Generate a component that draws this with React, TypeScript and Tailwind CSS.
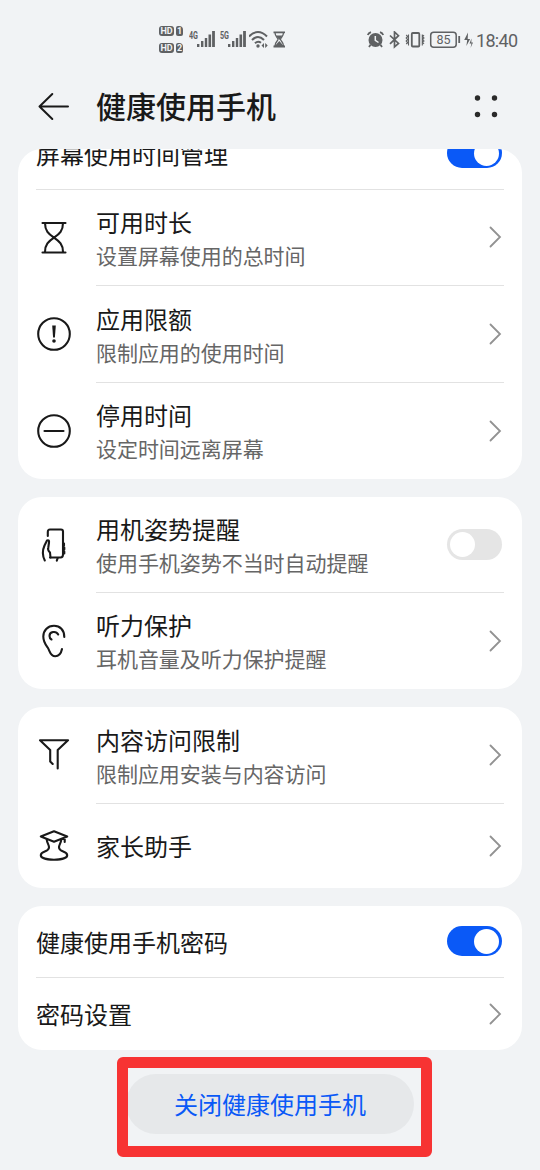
import type { ReactNode } from "react";

const Signal = ({ label }: { label: string }) => (
  <svg width="28" height="20" viewBox="0 0 28 20" fill="#5f6163">
    <text x="0" y="9.500" fontSize="10" fontWeight="700" textLength="9" lengthAdjust="spacingAndGlyphs" className="font-[Roboto,sans-serif]">
      {label}
    </text>
    <rect x="8" y="15" width="2.4" height="3" />
    <rect x="12" y="12" width="2.4" height="6" />
    <rect x="15.800" y="9" width="2.4" height="9" />
    <rect x="19.500" y="5.500" width="2.600" height="12.500" />
    <rect x="23.100" y="2" width="2.800" height="16" />
  </svg>
);

const HdBadge = ({ sim }: { sim: string }) => (
  <div className="flex gap-[2px] text-[9px] leading-[10px] font-bold text-[#f1f3f5] font-[Roboto,sans-serif]">
    <span className="h-[10px] w-[15px] rounded-[3px] bg-[#5f6163] text-center tracking-[-0.2px]">HD</span>
    <span className="h-[10px] w-[7px] rounded-[2px] rounded-tr-[4px] bg-[#5f6163] text-center">{sim}</span>
  </div>
);

const StatusBar = () => (
  <div className="flex h-[76px] shrink-0 justify-between pl-[159px] pr-[22px] pt-[26px]">
    <div className="flex">
      <div className="flex w-[30px] flex-col gap-[7px]">
        <HdBadge sim="1" />
        <HdBadge sim="2" />
      </div>
      <div className="flex pt-[3px]">
        <Signal label="4G" />
        <div className="w-[3px]" />
        <Signal label="5G" />
      </div>
      <svg className="mt-[4px] ml-px" width="20" height="20" viewBox="0 0 20 20" fill="none" stroke="#5f6163" strokeWidth="2">
        <path d="M0 6.500Q9-2.500 18 6.500M3 10Q9 4 15 10M6 13.200Q9 10.500 12 12.800" />
        <circle cx="9" cy="16" r="1.700" fill="#5f6163" stroke="none" />
        <path d="M15 13v5l-2.500-2.500zM16.200 13v5l2.500-2.500z" fill="#5f6163" stroke="none" />
      </svg>
      <svg className="mt-[5px] ml-[4px]" width="13" height="17" viewBox="0 0 13 17" fill="none" stroke="#5f6163" strokeWidth="1.300">
        <path d="M.5 1.300h11.500M.5 15.500h11.500" strokeWidth="1.800" />
        <path d="M2 1.500C2 6 5 6.500 5 8.300S2 11 2 15M10.500 1.500C10.500 6 7.500 6.500 7.500 8.300S10.500 11 10.500 15" />
        <path d="M3 4.500h6.500L6.300 9zM6.300 10l4.400 5h-8.900z" fill="#5f6163" stroke="none" />
      </svg>
    </div>
    <div className="flex pt-[5px]">
      <svg width="106" height="18" viewBox="0 0 106 18" fill="none" stroke="#5f6163" strokeWidth="1.500">
        <circle cx="8.500" cy="9" r="7" fill="#5f6163" stroke="none" />
        <path d="M.8 4Q1.500 2 4 1.200M13 1.200Q15.500 2 16.200 4M3.500 13.800L2 16M13.500 13.800L15 16" strokeWidth="1.800" />
        <path d="M8.300 5v4.300l3.200 2.200" stroke="#f1f3f5" />
        <path d="M23 4.500l8.500 8L27.500 16V1l4 3.700L23 12.800" strokeWidth="1.700" />
        <rect x="44.800" y="2" width="7.500" height="13.500" rx="1" strokeWidth="1.800" />
        <path d="M39.200 4l1.500 1.500-1.500 1.500 1.500 1.500-1.500 1.500 1.500 1.500-1.500 1.500M41.500 3.500v11M55.300 3.500v11M57 4l-1.300 1.500 1.300 1.500-1.300 1.500 1.300 1.500-1.300 1.500 1.300 1.500" strokeWidth="1.100" />
        <rect x="63.700" y="1.300" width="25.500" height="15" rx="3" />
        <text x="69.500" y="13.200" fontSize="12.500" fill="#5f6163" stroke="none" textLength="14" className="font-[Roboto,sans-serif]">
          85
        </text>
        <path d="M92.200 5v7" strokeWidth="1.800" />
        <path d="M101 1.500l-3.800 7.500h3l-.8 6 3.700-7h-2.400zM104.500 7.500l-2 5h2l-1 4.500 2.500-5.500h-1.700z" fill="#5f6163" stroke="none" />
      </svg>
      <span className="ml-[3px] w-[42px] whitespace-nowrap text-[18px] leading-[19px] tracking-[-0.7px] text-[#5f6163] font-[Roboto,sans-serif]">
        18:40
      </span>
    </div>
  </div>
);

const Header = () => (
  <div className="flex h-[60px] shrink-0 items-center pl-9 pr-10">
    <svg width="36" height="36" viewBox="0 0 36 36" fill="none" stroke="#191919" strokeWidth="2" strokeLinecap="round" strokeLinejoin="round">
      <path d="M32 18.500H3.500M16.300 6L3.500 18.500 16.300 31" />
    </svg>
    <h1 className="ml-6 flex-1 pb-[2px] text-[30px] leading-[44px] font-medium">健康使用手机</h1>
    <svg width="28" height="28" viewBox="0 0 28 28" fill="#2a2a2a">
      <circle cx="5.500" cy="6" r="2.700" />
      <circle cx="22.500" cy="6" r="2.700" />
      <circle cx="5.500" cy="22.500" r="2.700" />
      <circle cx="22.500" cy="22.500" r="2.700" />
    </svg>
  </div>
);

const Chevron = () => (
  <svg width="16" height="24" viewBox="0 0 16 24" fill="none" stroke="#929292" strokeWidth="1.800" strokeLinecap="round">
    <path d="M2.500 2.500L12 12 2.500 21.500" />
  </svg>
);

const Toggle = ({ on }: { on?: boolean }) => (
  <span className={`mr-[2.5px] flex h-[30.5px] w-[55px] items-center rounded-full px-[3px] ${on ? "justify-end bg-[#0a59f7]" : "bg-[#e5e5e5]"}`}>
    <span className="size-[25px] rounded-full bg-white" />
  </span>
);

const Icon = ({ children }: { children: ReactNode }) => (
  <svg className="mr-6 shrink-0" width="36" height="36" viewBox="0 0 36 36" fill="none" stroke="#191919" strokeWidth="2.100" strokeLinecap="round" strokeLinejoin="round">
    {children}
  </svg>
);

const icons = {
  hourglass: (
    <Icon>
      <path d="M6.500 3h23M6.500 32.500h23M9 3C9 11 12.500 14 18 17.700C12.500 21.500 9 24.500 9 32M27 3C27 11 23.500 14 18 17.700C23.500 21.500 27 24.500 27 32" />
    </Icon>
  ),
  limit: (
    <Icon>
      <circle cx="18" cy="18" r="15.800" />
      <path d="M16.200 9.500h3.600l-.9 12h-1.800z" fill="#191919" stroke="none" />
      <circle cx="18" cy="25" r="1.800" fill="#191919" stroke="none" />
    </Icon>
  ),
  pause: (
    <Icon>
      <circle cx="18" cy="18" r="15.800" />
      <path d="M8.500 18h19" />
    </Icon>
  ),
  posture: (
    <Icon>
      <path d="M11.800 9V5Q11.800 2.500 14 2.500H25Q27 2.500 27 4.500V27.500Q27 30.500 24.500 30.500H14" />
      <path d="M8.800 33.500C6 28 6.500 23 8.500 18.500L11 13.500Q13.500 12.500 13 15.500L12.300 20.500Q11.300 23 14 25.500L14.500 30.500" />
      <path d="M28 16.500v2M28.300 20.500v2M28.300 24.500v2M21.700 31l-.9 2.700" />
    </Icon>
  ),
  ear: (
    <Icon>
      <path d="M28.300 14C28.300 7 24 2.800 18 2.800C11.500 2.800 7.300 7.500 7.300 13.500C7.300 19 9.500 21.500 11.700 24.500C14 28 14 33.200 19.200 33.200Q24.500 33.200 26 26" />
      <path d="M22.200 11.500C20 7.500 13.500 8.500 13.500 13Q13.500 15.500 15.500 16.500" />
    </Icon>
  ),
  funnel: (
    <Icon>
      <path d="M21.700 31.500V13L32 3.300H4L14.200 13V24.500l2.500 2.500" />
    </Icon>
  ),
  graduate: (
    <Icon>
      <path d="M4.800 8.500L18 3.300l13.200 5.200L18 13.700zM28.700 9.500v4.500" />
      <path d="M10.700 11.500C11 15 13.200 17 13 19.500C12.800 24.500 4.800 22.500 4.800 27.300C4.800 33.200 31.200 33.200 31.200 27.300C31.200 22.500 23.200 24.500 23 19.500C22.800 17 25 15 25.300 11.500" />
    </Icon>
  ),
};

type RowProps = {
  icon?: keyof typeof icons;
  title: string;
  desc?: string;
  toggle?: "on" | "off";
  size: string;
  last?: boolean;
};

const Row = ({ icon, title, desc, toggle, size, last }: RowProps) => (
  <div className={`flex items-center ${size}`}>
    {icon && icons[icon]}
    <div className={`flex h-full flex-1 items-center justify-between ${last ? "" : "border-b border-[#e2e2e2]"}`}>
      <div className={last ? "" : "pt-[1.5px]"}>
        <div className="text-[24px] leading-[34px]">{title}</div>
        {desc && <div className="text-[21px] leading-[32px] tracking-[-0.05px] text-[#666]">{desc}</div>}
      </div>
      {toggle ? <Toggle on={toggle === "on"} /> : <Chevron />}
    </div>
  </div>
);

const Card = ({ children }: { children: ReactNode }) => (
  <section className="shrink-0 rounded-[24px] bg-white px-[18px]">{children}</section>
);

export default function App() {
  return (
    <div className="flex h-[1170px] w-[540px] flex-col overflow-hidden bg-[#f1f3f5] text-[#191919] font-['Noto_Sans_CJK_SC',sans-serif]">
      <StatusBar />
      <Header />
      <main className="mx-[18px] mt-[12.500px] flex min-h-0 flex-1 flex-col gap-[18px]">
        {/* list is scrolled, the first row is partly hidden */}
        <section className="flex h-[330px] shrink-0 flex-col justify-end overflow-hidden rounded-[24px] bg-white px-[18px]">
          <Row title="屏幕使用时间管理" toggle="on" size="h-[72px] shrink-0" />
          <Row icon="hourglass" title="可用时长" desc="设置屏幕使用的总时间" size="h-[96.5px] shrink-0" />
          <Row icon="limit" title="应用限额" desc="限制应用的使用时间" size="h-[96.5px] shrink-0" />
          <Row icon="pause" title="停用时间" desc="设定时间远离屏幕" size="h-[96px] shrink-0" last />
        </section>
        <Card>
          <Row icon="posture" title="用机姿势提醒" desc="使用手机姿势不当时自动提醒" toggle="off" size="h-[96.5px]" />
          <Row icon="ear" title="听力保护" desc="耳机音量及听力保护提醒" size="h-[96px]" last />
        </Card>
        <Card>
          <Row icon="funnel" title="内容访问限制" desc="限制应用安装与内容访问" size="h-[96.5px]" />
          <Row icon="graduate" title="家长助手" size="h-[84px]" last />
        </Card>
        <Card>
          <Row title="健康使用手机密码" toggle="on" size="h-[72px]" />
          <Row title="密码设置" size="h-[72px]" last />
        </Card>
        <div className="relative -mt-[11px] ml-[99px] h-[100px] w-[315px] shrink-0 pt-[17px]">
          <button className="ml-[9px] h-[60px] w-[288px] rounded-full bg-[#e6e8ea] pt-px text-[24px] text-[#0a59f7]">关闭健康使用手机</button>
          <div className="pointer-events-none absolute inset-0 rounded-[6px] border-[11px] border-[#f73333]" />
        </div>
      </main>
    </div>
  );
}
